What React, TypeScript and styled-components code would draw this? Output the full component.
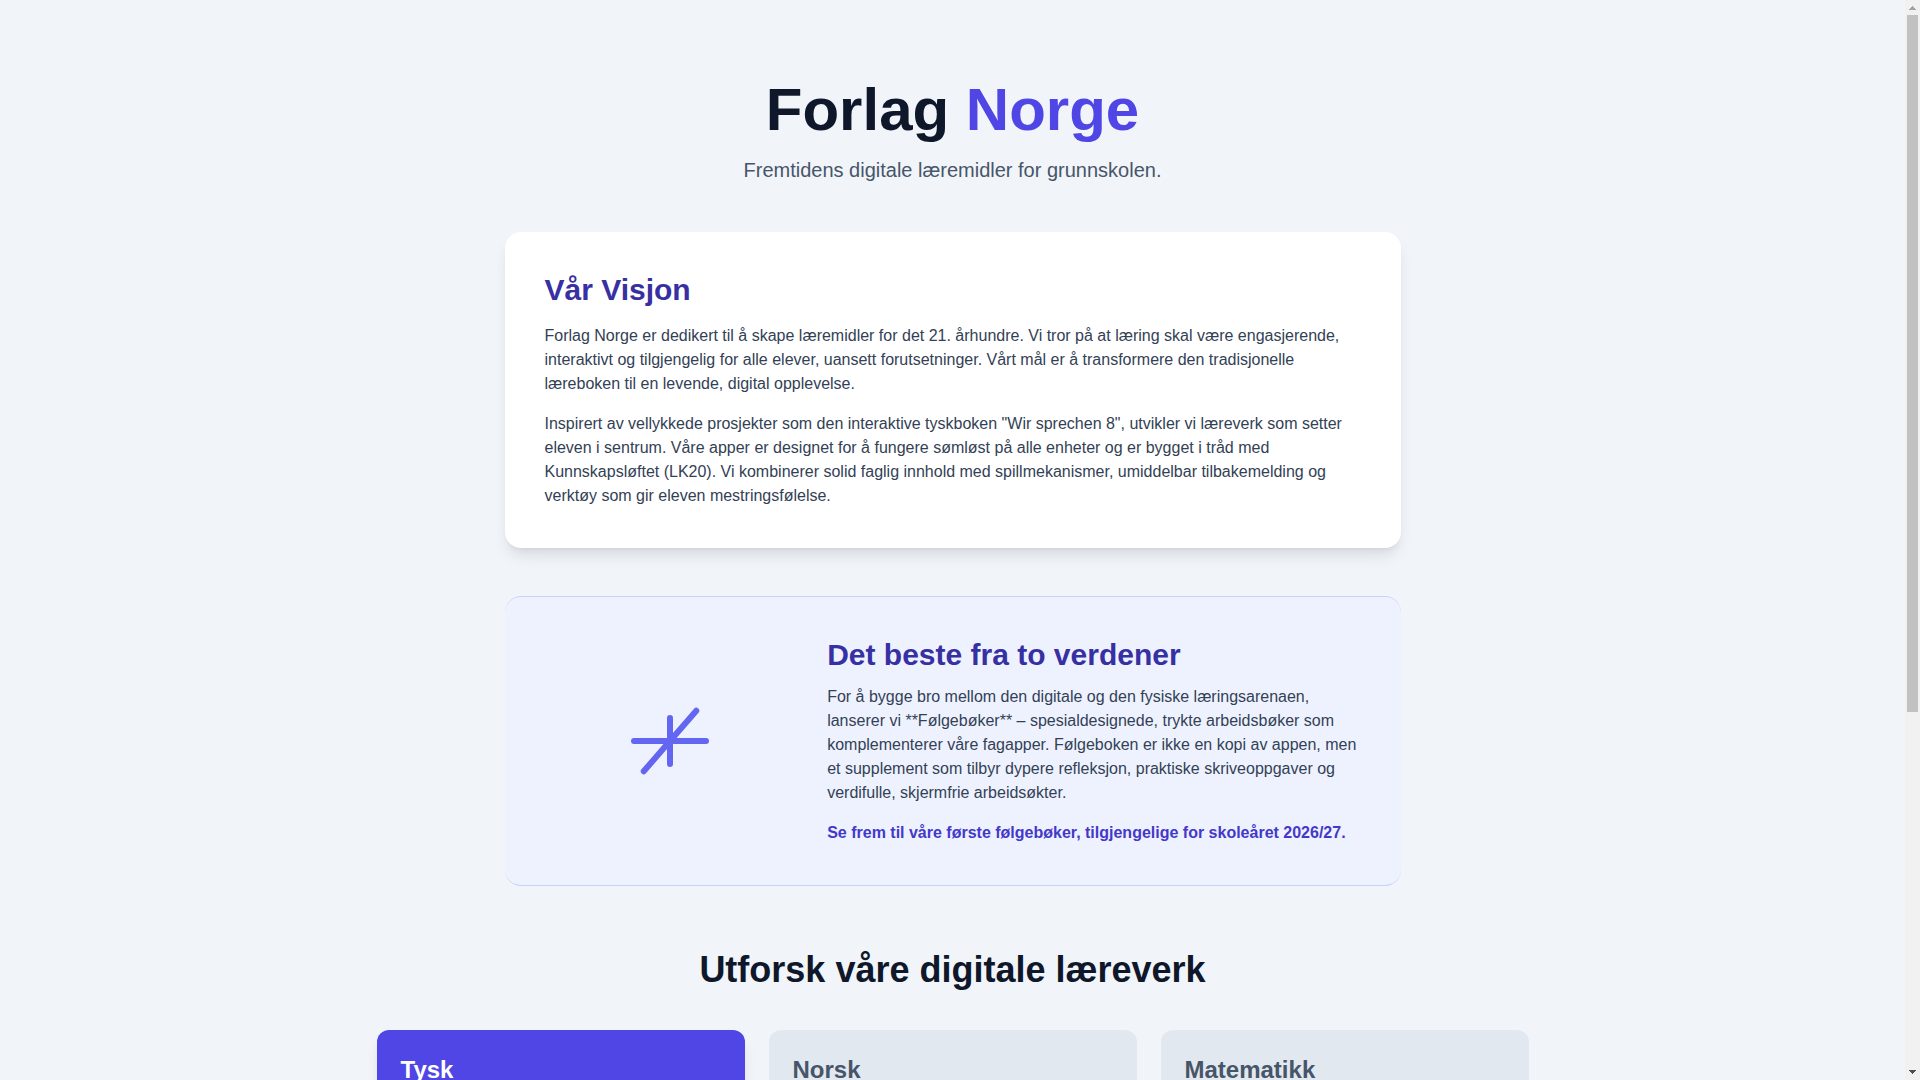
import React, { useCallback, useEffect, useRef, useState } from "react";
import styled, { createGlobalStyle } from "styled-components";

const GlobalStyle = createGlobalStyle`
  *, *::before, *::after { box-sizing: border-box; }
  body {
    margin: 0;
    background: #f1f5f9;
    color: #334155;
    font-family: "Liberation Sans", Arial, sans-serif;
    font-size: 16px;
    line-height: 24px;
  }
  h1, h2, h3, p { margin: 0; }
`;

const Shell = styled.div`
  display: flex;
  height: 100vh;
`;

const Viewport = styled.div`
  flex: 1;
  min-width: 0;
  overflow-y: auto;
  scrollbar-width: none;
`;

const Scrollbar = styled.div`
  display: flex;
  flex-direction: column;
  flex: none;
  width: 15px;
  background: #f1f1f1;
`;

const ScrollButton = styled.button`
  display: block;
  width: 15px;
  height: 15px;
  padding: 0;
  border: 0;
  background: none;
  svg { display: block; }
`;

const Track = styled.div`
  flex: 1;
  padding: 0 2px;
`;

const Thumb = styled.div`
  background: #c1c1c1;
`;

const Page = styled.div`
  max-width: 1200px;
  margin: 0 auto;
  padding: 80px 24px;
`;

const Header = styled.header`
  margin-bottom: 48px;
  text-align: center;
`;

const Title = styled.h1`
  color: #0f172a;
  font-size: 60px;
  line-height: 60px;
`;

const Accent = styled.span`
  color: #4f46e5;
`;

const Tagline = styled.p`
  && { margin-top: 16px; }
  color: #475569;
  font-size: 20px;
  line-height: 28px;
`;

const Section = styled.section`
  max-width: 896px;
  margin: 0 auto 48px;
  padding: 40px;
  border-radius: 16px;
`;

const Vision = styled(Section)`
  background: #fff;
  box-shadow: 0 10px 15px -3px rgba(0, 0, 0, 0.1), 0 4px 6px -4px rgba(0, 0, 0, 0.1);
`;

const Companion = styled(Section)`
  display: grid;
  grid-template-columns: repeat(3, minmax(0, 1fr));
  align-items: center;
  gap: 32px;
  margin-bottom: 64px;
  background: #eef2ff;
  border-top: 1px solid #c7d2fe;
  border-bottom: 1px solid #c7d2fe;
`;

const IconCell = styled.div`
  display: flex;
  justify-content: center;
`;

const CompanionBody = styled.div`
  grid-column: span 2;
`;

const SectionTitle = styled.h2<{ $gap: number }>`
  && { margin-bottom: ${(p) => p.$gap}px; }
  color: #3730a3;
  font-size: 30px;
  line-height: 36px;
`;

const Paragraph = styled.p`
  & + & { margin-top: 16px; }
`;

const Notice = styled.p`
  && { margin-top: 16px; }
  color: #4338ca;
  font-weight: 700;
`;

const CatalogTitle = styled.h2`
  && { margin-bottom: 40px; }
  color: #0f172a;
  font-size: 36px;
  line-height: 40px;
  text-align: center;
`;

const Catalog = styled.div`
  display: grid;
  grid-template-columns: repeat(3, minmax(0, 1fr));
  gap: 24px;
`;

const Card = styled.article<{ $active?: boolean }>`
  min-height: 516px;
  padding: 24px;
  border-radius: 12px;
  background: ${(p) => (p.$active ? "#4f46e5" : "#e2e8f0")};
  color: ${(p) => (p.$active ? "#fff" : "#475569")};
  box-shadow: ${(p) =>
    p.$active ? "0 10px 15px -3px rgba(0, 0, 0, 0.1), 0 4px 6px -4px rgba(0, 0, 0, 0.1)" : "none"};
`;

const CardTitle = styled.h3`
  font-size: 24px;
  line-height: 32px;
`;

const subjects = [
  { name: "Tysk", active: true },
  { name: "Norsk", active: false },
  { name: "Matematikk", active: false },
];

export default function App() {
  const view = useRef<HTMLDivElement>(null);
  const [scroll, setScroll] = useState({ size: 1, start: 0, end: false });

  const measure = useCallback(() => {
    const el = view.current;
    if (!el) return;
    setScroll({
      size: el.clientHeight / el.scrollHeight,
      start: el.scrollTop / el.scrollHeight,
      end: el.scrollTop + el.clientHeight >= el.scrollHeight - 1,
    });
  }, []);

  useEffect(() => {
    measure();
    window.addEventListener("resize", measure);
    return () => window.removeEventListener("resize", measure);
  }, [measure]);

  const step = (dy: number) => view.current?.scrollBy({ top: dy });

  return (
    <Shell>
      <GlobalStyle />
      <Viewport ref={view} onScroll={measure}>
        <Page>
          <Header>
            <Title>
              Forlag <Accent>Norge</Accent>
            </Title>
            <Tagline>Fremtidens digitale læremidler for grunnskolen.</Tagline>
          </Header>
          <main>
            <Vision>
              <SectionTitle $gap={16}>Vår Visjon</SectionTitle>
              <Paragraph>
                Forlag Norge er dedikert til å skape læremidler for det 21. århundre. Vi tror på at læring
                skal være engasjerende, interaktivt og tilgjengelig for alle elever, uansett
                forutsetninger. Vårt mål er å transformere den tradisjonelle læreboken til en levende,
                digital opplevelse.
              </Paragraph>
              <Paragraph>
                Inspirert av vellykkede prosjekter som den interaktive tyskboken "Wir sprechen 8", utvikler
                vi læreverk som setter eleven i sentrum. Våre apper er designet for å fungere sømløst på
                alle enheter og er bygget i tråd med Kunnskapsløftet (LK20). Vi kombinerer solid faglig
                innhold med spillmekanismer, umiddelbar tilbakemelding og verktøy som gir eleven
                mestringsfølelse.
              </Paragraph>
            </Vision>
            <Companion>
              <IconCell>
                <svg
                  width="96"
                  height="96"
                  viewBox="0 0 24 24"
                  fill="none"
                  stroke="#6366f1"
                  strokeWidth="1.5"
                  strokeLinecap="round"
                  strokeLinejoin="round"
                  aria-hidden="true"
                >
                  <path d="M12 6.253v11.494M3 12h18M5.43 19.57L18.57 4.43" />
                </svg>
              </IconCell>
              <CompanionBody>
                <SectionTitle $gap={12}>Det beste fra to verdener</SectionTitle>
                <Paragraph>
                  For å bygge bro mellom den digitale og den fysiske læringsarenaen, lanserer vi
                  **Følgebøker** – spesialdesignede, trykte arbeidsbøker som komplementerer våre fagapper.
                  Følgeboken er ikke en kopi av appen, men et supplement som tilbyr dypere refleksjon,
                  praktiske skriveoppgaver og verdifulle, skjermfrie arbeidsøkter.
                </Paragraph>
                <Notice>Se frem til våre første følgebøker, tilgjengelige for skoleåret 2026/27.</Notice>
              </CompanionBody>
            </Companion>
            <section>
              <CatalogTitle>Utforsk våre digitale læreverk</CatalogTitle>
              <Catalog>
                {subjects.map((s) => (
                  <Card key={s.name} $active={s.active}>
                    <CardTitle>{s.name}</CardTitle>
                  </Card>
                ))}
              </Catalog>
            </section>
          </main>
        </Page>
      </Viewport>
      <Scrollbar aria-hidden="true">
        <ScrollButton type="button" tabIndex={-1} onClick={() => step(-40)}>
          <svg width="15" height="15" shapeRendering="crispEdges" fill={scroll.start > 0 ? "#505050" : "#a3a3a3"}>
            <path d="M7 6h1v1h1v1h1v1h1v1H4V9h1V8h1V7h1z" />
          </svg>
        </ScrollButton>
        <Track>
          <Thumb
            style={{ height: `${scroll.size * 100}%`, transform: `translateY(${(scroll.start / scroll.size) * 100}%)` }}
          />
        </Track>
        <ScrollButton type="button" tabIndex={-1} onClick={() => step(40)}>
          <svg width="15" height="15" shapeRendering="crispEdges" fill={scroll.end ? "#a3a3a3" : "#505050"}>
            <path d="M4 5h7v1h-1v1H9v1H8v1H7V8H6V7H5V6H4z" />
          </svg>
        </ScrollButton>
      </Scrollbar>
    </Shell>
  );
}
